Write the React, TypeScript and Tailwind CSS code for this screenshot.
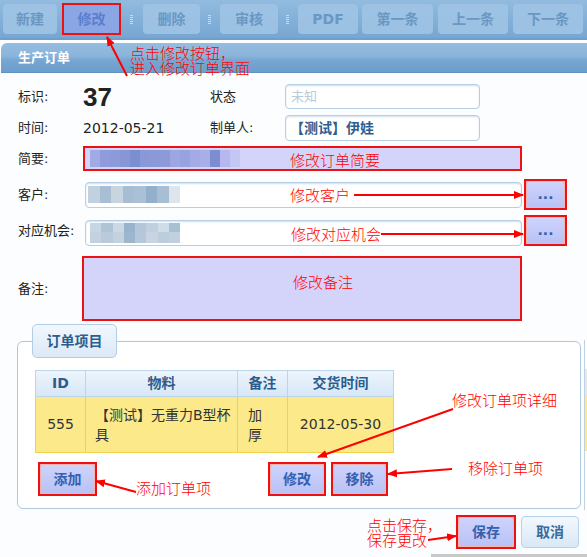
import React from "react";

const font = "font-['DejaVu_Sans','Noto_Sans_CJK_SC',sans-serif]";

function Pixels({ rows, cell }: { rows: string[][]; cell: number }) {
  return (
    <div className="flex flex-col">
      {rows.map((r, i) => (
        <div key={i} className="flex">
          {r.map((c, j) => (
            <div key={j} style={{ background: c, width: cell, height: rows.length > 1 ? (i === 0 ? 9 : 11) : 17 }} />
          ))}
        </div>
      ))}
    </div>
  );
}

function ToolBtn({ label, className = "" }: { label: string; className?: string }) {
  return (
    <div
      className={`h-[30px] flex items-center justify-center rounded-[4px] bg-[#9fc3e4]/90 text-[14px] font-bold text-[#6b97c3] ${className}`}
    >
      {label}
    </div>
  );
}

function Grip({ className = "" }: { className?: string }) {
  return (
    <div className={`flex flex-col gap-[1px] ${className}`}>
      {[0, 1, 2, 3, 4].map((i) => (
        <div key={i} className="w-[3px] h-[1px] bg-[#c4dcef]" />
      ))}
    </div>
  );
}

function Field({ children, className = "" }: { children?: React.ReactNode; className?: string }) {
  return (
    <div
      className={`rounded-[4px] border border-[#b4cfe6] bg-white shadow-[inset_0_1px_2px_rgba(120,160,200,0.35)] flex items-center ${className}`}
    >
      {children}
    </div>
  );
}

function RedBtn({ label, className = "" }: { label: string; className?: string }) {
  return (
    <div className={`border-2 border-[#ee1111] p-[1px] bg-[#f4b4b4] ${className}`}>
      <div className="w-full h-full rounded-[3px] bg-gradient-to-b from-[#cdd3fb] to-[#b9c2f6] flex items-center justify-center text-[14px] font-bold text-[#3560b0]">
        {label}
      </div>
    </div>
  );
}

function Label({ children }: { children: React.ReactNode }) {
  return <div className="w-[65px] shrink-0 text-[13px] text-[#222]">{children}</div>;
}

export default function App() {
  const note = "absolute text-[15px] leading-none text-[#ff0000] whitespace-nowrap font-['Noto_Sans_CJK_SC',sans-serif] font-light";
  return (
    <div className={`relative w-[587px] h-[557px] overflow-hidden bg-[#fcfdfe] ${font}`}>
      {/* toolbar */}
      <div className="h-[40px] flex items-center bg-gradient-to-b from-[#92bbdf] to-[#76a6d2] border-b-[2px] border-b-[#6e9fcc]">
        <ToolBtn label="新建" className="ml-[3px] w-[54px]" />
        <div className="ml-[5px] w-[59px] h-[32px] border-2 border-[#ee1111] bg-[#8aa6e4] flex items-center justify-center text-[14px] font-bold text-[#5b7ecd]">
          修改
        </div>
        <Grip className="ml-[9px]" />
        <ToolBtn label="删除" className="ml-[10px] w-[57px]" />
        <Grip className="ml-[8px]" />
        <ToolBtn label="审核" className="ml-[9px] w-[58px]" />
        <Grip className="ml-[8px]" />
        <ToolBtn label="PDF" className="ml-[9px] w-[60px]" />
        <ToolBtn label="第一条" className="ml-[4px] w-[71px]" />
        <ToolBtn label="上一条" className="ml-[5px] w-[70px]" />
        <ToolBtn label="下一条" className="ml-[5px] w-[70px]" />
      </div>

      {/* panel header */}
      <div className="mt-[3px] ml-[1px] h-[30px] rounded-tl-[6px] border-b border-[#5e92c4] bg-[linear-gradient(180deg,#96bde0_0%,#8ab4da_45%,#76a6d2_60%,#6c9ecc_100%)] flex items-center pl-[17px] text-[13px] font-bold text-white">
        生产订单
      </div>

      {/* form */}
      <div className="pl-[18px]">
        <div className="mt-[11px] h-[25px] flex items-center">
          <Label>标识:</Label>
          <div className="w-[127px] text-[26px] font-bold leading-none text-[#222] font-['Liberation_Sans',sans-serif]">37</div>
          <div className="w-[75px] text-[13px] text-[#222]">状态</div>
          <Field className="w-[195px] h-[25px] pl-[5px] text-[13px] text-[#b9cadb]">未知</Field>
        </div>
        <div className="mt-[6px] h-[26px] flex items-center">
          <Label>时间:</Label>
          <div className="w-[127px] text-[14px] text-[#222]">2012-05-21</div>
          <div className="w-[75px] text-[13px] text-[#222]">制单人:</div>
          <Field className="w-[195px] h-[26px] pl-[4px] text-[14px] font-bold text-[#2d5d8e]">【测试】伊娃</Field>
        </div>
        <div className="mt-[5px] h-[25px] flex items-center">
          <Label>简要:</Label>
          <div className="w-[439px] h-[25px] border-2 border-[#ee1111] bg-[#d4d4fa] flex items-center pl-[5px]">
            <Pixels
              cell={10}
              rows={[
                ["#a2aae4", "#8f9cdc", "#8d9ada", "#8896d6", "#7a8ed0", "#8a98d6", "#8c99d8", "#8c9ad9", "#9ea6e2", "#98a2e0", "#a4aae6", "#a8aee6", "#7c8ed0", "#b4b8ee", "#c4c6f4"],
              ]}
            />
          </div>
        </div>
        <div className="mt-[8px] h-[31px] flex items-center">
          <Label>客户:</Label>
          <Field className="ml-[2px] w-[437px] h-[26px] pl-[2px] overflow-hidden">
            <Pixels
              cell={11.5}
              rows={[["#c2d1e0", "#a8bed4", "#c8d4e0", "#a6bdd3", "#aac0d5", "#93afcb", "#a8bed4", "#dde5ed"]]}
            />
          </Field>
          <RedBtn label="..." className="ml-[2px] w-[43px] h-[31px]" />
        </div>
        <div className="mt-[5px] h-[31px] flex items-center">
          <Label>对应机会:</Label>
          <Field className="ml-[2px] w-[437px] h-[26px] mt-[5px] pl-[4px] overflow-hidden">
            <Pixels
              cell={11.3}
              rows={[
                ["#c8d6e4", "#b0c4d8", "#ccd8e4", "#98b4cc", "#b4c6da", "#c0d0de", "#d0dce6", "#a8c0d4"],
                ["#c4d2e0", "#b8cadc", "#c4d2e0", "#9cb6ce", "#b4c8da", "#c8d4e2", "#bccddc", "#c0d0de"],
              ]}
            />
          </Field>
          <RedBtn label="..." className="ml-[2px] w-[43px] h-[31px]" />
        </div>
        <div className="mt-[10px] h-[65px] flex items-center">
          <Label>备注:</Label>
          <div className="-ml-[1px] w-[440px] h-[65px] border-2 border-[#ee1111] bg-[#d4d4fa]" />
        </div>
      </div>

      {/* order items */}
      <div className="mt-[3px] flex">
        <div className="ml-[17px] w-[564px]">
          <div className="relative z-10 ml-[15px] w-[85px] h-[34px] rounded-[5px] border border-[#b2cde5] bg-gradient-to-b from-[#f2f7fd] to-[#dbe9f7] flex items-center justify-center text-[14px] font-bold text-[#2d5d8e]">
            订单项目
          </div>
          <div className="-mt-[17px] h-[168px] rounded-[6px] border border-[#aec8e0] bg-white pt-[28px] pl-[17px]">
            <table className="border-collapse text-[14px] text-[#333]">
              <thead>
                <tr className="h-[26px] bg-gradient-to-b from-[#edf4fc] to-[#d6e7f7] text-[#2d5d8e] font-bold">
                  <th className="w-[50px] border border-[#bcd4ea] font-bold">ID</th>
                  <th className="w-[152px] border border-[#bcd4ea] font-bold">物料</th>
                  <th className="w-[50px] border border-[#bcd4ea] font-bold">备注</th>
                  <th className="w-[106px] border border-[#bcd4ea] font-bold">交货时间</th>
                </tr>
              </thead>
              <tbody>
                <tr className="h-[56px] bg-[#fbe98a]">
                  <td className="border border-[#f2d24a] text-center">555</td>
                  <td className="border border-[#f2d24a] pl-[9px] leading-[20px]">
                    【测试】无重力B型杯
                    <br />具
                  </td>
                  <td className="border border-[#f2d24a] pl-[10px] leading-[20px]">
                    加<br />厚
                  </td>
                  <td className="border border-[#f2d24a] text-center">2012-05-30</td>
                </tr>
              </tbody>
            </table>
            <div className="mt-[9px] flex">
              <RedBtn label="添加" className="ml-[3px] w-[59px] h-[34px]" />
              <RedBtn label="修改" className="ml-[171px] w-[58px] h-[34px]" />
              <RedBtn label="移除" className="ml-[5px] w-[57px] h-[34px]" />
            </div>
          </div>
        </div>
        <div className="ml-[3px] mt-[16px] w-[3px] h-[170px] border-l border-[#c4d0dc] pt-[29px]">
          <div className="h-[26px] bg-[#dce9f6]" />
          <div className="h-[56px] bg-[#fbe98a]" />
        </div>
      </div>

      {/* bottom buttons */}
      <div className="mt-[5px] flex items-center justify-end pr-[8px]">
        <RedBtn label="保存" className="w-[60px] h-[34px]" />
        <div className="ml-[5px] w-[58px] h-[32px] rounded-[4px] border border-[#b6d2ea] bg-gradient-to-b from-[#f3f8fd] to-[#d9e8f6] flex items-center justify-center text-[14px] font-bold text-[#3a6a9a]">
          取消
        </div>
      </div>
      <div className="mt-[5px] ml-[431px] h-[4px] bg-[#c9c9c9]" />

      {/* annotations */}
      <div className="absolute inset-0 pointer-events-none">
        <svg className="absolute inset-0" width="587" height="557">
          <defs>
            <marker id="ah" markerWidth="10" markerHeight="8" refX="9" refY="4" orient="auto" markerUnits="userSpaceOnUse">
              <path d="M0,0 L10,4 L0,8 Z" fill="#ff0000" />
            </marker>
          </defs>
          <g stroke="#ff0000" strokeWidth="2" fill="none">
            <line x1="127" y1="76" x2="107" y2="37" markerEnd="url(#ah)" />
            <line x1="354" y1="195" x2="523" y2="195" markerEnd="url(#ah)" />
            <line x1="381" y1="234" x2="523" y2="234" markerEnd="url(#ah)" />
            <line x1="453" y1="409" x2="318" y2="457" markerEnd="url(#ah)" />
            <line x1="136" y1="492" x2="96" y2="481" markerEnd="url(#ah)" />
            <line x1="452" y1="469" x2="388" y2="474" markerEnd="url(#ah)" />
            <line x1="428" y1="540" x2="456" y2="536" markerEnd="url(#ah)" />
          </g>
        </svg>
        <span className={`${note} left-[130px] top-[45px] leading-[17px]`}>
          点击修改按钮，
          <br />
          进入修改订单界面
        </span>
        <span className={`${note} left-[290px] top-[152px]`}>修改订单简要</span>
        <span className={`${note} left-[290px] top-[187px]`}>修改客户</span>
        <span className={`${note} left-[291px] top-[226px]`}>修改对应机会</span>
        <span className={`${note} left-[293px] top-[274px]`}>修改备注</span>
        <span className={`${note} left-[452px] top-[392px]`}>修改订单项详细</span>
        <span className={`${note} left-[136px] top-[480px]`}>添加订单项</span>
        <span className={`${note} left-[468px] top-[460px]`}>移除订单项</span>
        <span className={`${note} left-[367px] top-[517px] leading-[18px]`}>
          点击保存，
          <br />
          保存更改
        </span>
      </div>
    </div>
  );
}
